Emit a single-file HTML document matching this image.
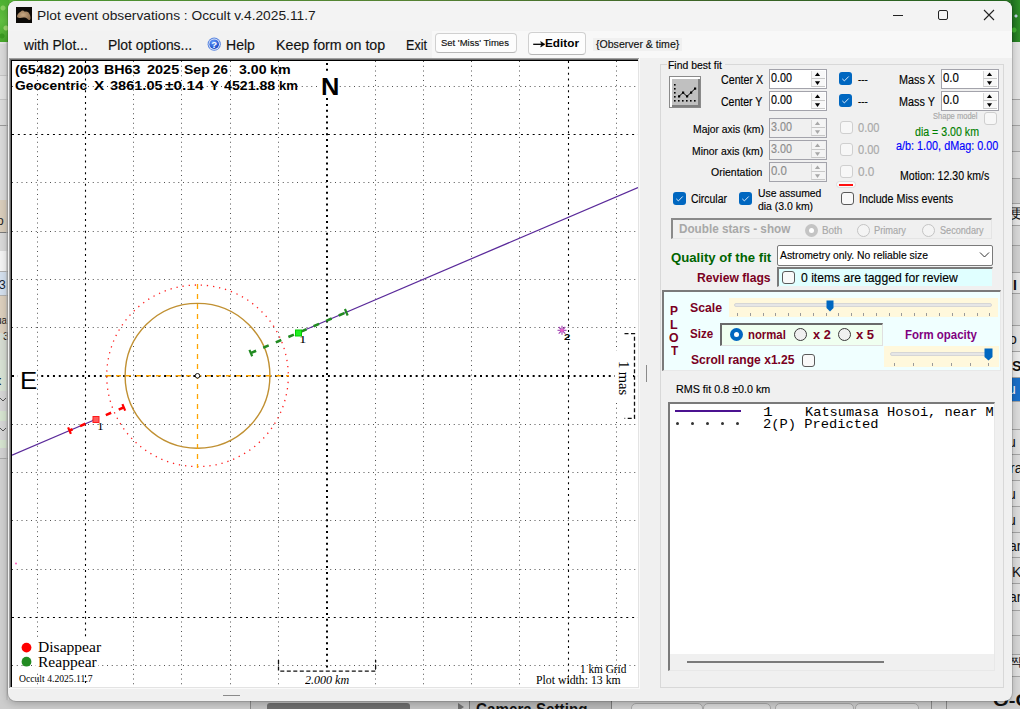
<!DOCTYPE html>
<html><head><meta charset="utf-8"><style>
html,body{margin:0;padding:0;background:#cfcfcf}
#root{position:relative;width:1020px;height:709px;overflow:hidden}
.t{position:absolute;white-space:pre;transform-origin:0 0}
</style></head><body><div id="root">
<div style="position:absolute;left:0px;top:0px;width:1020px;height:709px;background:#cfcfcf"></div>
<div style="position:absolute;left:0px;top:0px;width:1020px;height:42px;background:linear-gradient(90deg,#5ab83a,#6aa040 40%,#4a7a30 70%,#2a7a25)"></div>
<div style="position:absolute;left:0px;top:0px;width:9px;height:42px;background:radial-gradient(circle at 3px 8px,#8ad060 0,#8ad060 2px,transparent 3px),radial-gradient(circle at 6px 28px,#a0d870 0,#a0d870 2px,transparent 3px),radial-gradient(circle at 2px 36px,#3a9a20 0,#3a9a20 2px,transparent 3px),linear-gradient(#4cb030,#62c040 50%,#48a82c)"></div>
<div style="position:absolute;left:1011px;top:0px;width:9px;height:42px;background:radial-gradient(circle at 5px 16px,#c0d0e0 0,#c0d0e0 1px,transparent 2px),radial-gradient(circle at 3px 30px,#40b030 0,#40b030 2px,transparent 3px),linear-gradient(90deg,#1e6e1e,#2e8e28)"></div>
<div style="position:absolute;left:0px;top:42px;width:9px;height:667px;background:#d8d8d8"></div>
<div style="position:absolute;left:0px;top:42px;width:8px;height:2px;background:#e6e6e6"></div>
<div style="position:absolute;left:0px;top:44px;width:8px;height:31px;background:#dadada"></div>
<div style="position:absolute;left:0px;top:75px;width:8px;height:1px;background:#c4c4c4"></div>
<div style="position:absolute;left:0px;top:76px;width:8px;height:23px;background:#e2e2e2"></div>
<div style="position:absolute;left:0px;top:99px;width:8px;height:1px;background:#c4c4c4"></div>
<div style="position:absolute;left:0px;top:100px;width:8px;height:25px;background:#dcdcdc"></div>
<div style="position:absolute;left:0px;top:125px;width:8px;height:1px;background:#9a9a9a"></div>
<div style="position:absolute;left:0px;top:126px;width:8px;height:74px;background:#dadada"></div>
<div style="position:absolute;left:0px;top:200px;width:8px;height:32px;background:#d9cdbb"></div>
<div style="position:absolute;left:0px;top:232px;width:8px;height:1px;background:#7a7a7a"></div>
<div style="position:absolute;left:0px;top:233px;width:8px;height:18px;background:#d9d9d9"></div>
<div style="position:absolute;left:0px;top:251px;width:8px;height:20px;background:#f4f4f4"></div>
<div style="position:absolute;left:0px;top:271px;width:8px;height:1px;background:#b0b0b0"></div>
<div style="position:absolute;left:0px;top:272px;width:8px;height:23px;background:#d4e0ee"></div>
<div style="position:absolute;left:0px;top:295px;width:8px;height:1px;background:#b0b0b0"></div>
<div style="position:absolute;left:0px;top:296px;width:8px;height:37px;background:#dccfbd"></div>
<div style="position:absolute;left:0px;top:333px;width:8px;height:27px;background:#d6dcd2"></div>
<div style="position:absolute;left:0px;top:360px;width:8px;height:31px;background:#d8e2d4"></div>
<div style="position:absolute;left:0px;top:391px;width:8px;height:20px;background:#d6d6d6"></div>
<div style="position:absolute;left:0px;top:411px;width:8px;height:10px;background:#d6e4d0"></div>
<div style="position:absolute;left:0px;top:421px;width:8px;height:19px;background:#d6d6d6"></div>
<div style="position:absolute;left:0px;top:440px;width:8px;height:8px;background:#d6e4d0"></div>
<div style="position:absolute;left:0px;top:448px;width:8px;height:10px;background:#d2d2d2"></div>
<div style="position:absolute;left:0px;top:458px;width:8px;height:1px;background:#a8a8a8"></div>
<div style="position:absolute;left:0px;top:459px;width:8px;height:250px;background:#d0d0d0"></div>
<svg style="position:absolute;left:0;top:0" width="9" height="709" viewBox="0 0 9 709"><text x="-3" y="225" font-family="Liberation Sans" font-size="12" fill="#222">o</text><text x="-1" y="289" font-family="Liberation Sans" font-size="12" fill="#123">3</text><text x="-4" y="324" font-family="Liberation Sans" font-size="10" fill="#222">ua</text><text x="-3" y="340" font-family="Liberation Sans" font-size="11" fill="#222">. 3</text><text x="-3" y="385" font-family="Liberation Sans" font-weight="bold" font-size="12" fill="#111">t</text><path d="M0 398 L3 401 L6 398 M0 428 L3 431 L6 428" stroke="#555" stroke-width="1" fill="none"/><rect x="6" y="42" width="2" height="667" fill="#bdbdbd" opacity="0.6"/></svg>
<div style="position:absolute;left:1012px;top:42px;width:8px;height:57px;background:#e4e4e4"></div>
<div style="position:absolute;left:1012px;top:99px;width:8px;height:26px;background:#dcdcdc"></div>
<div style="position:absolute;left:1012px;top:99px;width:8px;height:1px;background:#a4a4a4"></div>
<div style="position:absolute;left:1012px;top:125px;width:8px;height:26px;background:#d4d4d4"></div>
<div style="position:absolute;left:1012px;top:125px;width:8px;height:1px;background:#a4a4a4"></div>
<div style="position:absolute;left:1012px;top:151px;width:8px;height:27px;background:#dcdcdc"></div>
<div style="position:absolute;left:1012px;top:151px;width:8px;height:1px;background:#a4a4a4"></div>
<div style="position:absolute;left:1012px;top:178px;width:8px;height:25px;background:#cfcfcf"></div>
<div style="position:absolute;left:1012px;top:178px;width:8px;height:1px;background:#a4a4a4"></div>
<div style="position:absolute;left:1012px;top:203px;width:8px;height:22px;background:#e6e6e6"></div>
<div style="position:absolute;left:1012px;top:203px;width:8px;height:1px;background:#a4a4a4"></div>
<div style="position:absolute;left:1012px;top:225px;width:8px;height:20px;background:#d8d8d8"></div>
<div style="position:absolute;left:1012px;top:225px;width:8px;height:1px;background:#a4a4a4"></div>
<div style="position:absolute;left:1012px;top:245px;width:8px;height:27px;background:#d0d0d0"></div>
<div style="position:absolute;left:1012px;top:245px;width:8px;height:1px;background:#a4a4a4"></div>
<div style="position:absolute;left:1012px;top:272px;width:8px;height:21px;background:#e6e6e6"></div>
<div style="position:absolute;left:1012px;top:272px;width:8px;height:1px;background:#a4a4a4"></div>
<div style="position:absolute;left:1012px;top:293px;width:8px;height:32px;background:#dadada"></div>
<div style="position:absolute;left:1012px;top:293px;width:8px;height:1px;background:#a4a4a4"></div>
<div style="position:absolute;left:1012px;top:325px;width:8px;height:26px;background:#e2e2e2"></div>
<div style="position:absolute;left:1012px;top:325px;width:8px;height:1px;background:#a4a4a4"></div>
<div style="position:absolute;left:1012px;top:351px;width:8px;height:26px;background:#ececec"></div>
<div style="position:absolute;left:1012px;top:351px;width:8px;height:1px;background:#a4a4a4"></div>
<div style="position:absolute;left:1012px;top:377px;width:8px;height:24px;background:#1a6fc9"></div>
<div style="position:absolute;left:1012px;top:377px;width:8px;height:1px;background:#a4a4a4"></div>
<div style="position:absolute;left:1012px;top:401px;width:8px;height:28px;background:#dcdcdc"></div>
<div style="position:absolute;left:1012px;top:401px;width:8px;height:1px;background:#a4a4a4"></div>
<div style="position:absolute;left:1012px;top:429px;width:8px;height:25px;background:#e0e0e0"></div>
<div style="position:absolute;left:1012px;top:429px;width:8px;height:1px;background:#a4a4a4"></div>
<div style="position:absolute;left:1012px;top:454px;width:8px;height:26px;background:#dcdcdc"></div>
<div style="position:absolute;left:1012px;top:454px;width:8px;height:1px;background:#a4a4a4"></div>
<div style="position:absolute;left:1012px;top:480px;width:8px;height:26px;background:#e0e0e0"></div>
<div style="position:absolute;left:1012px;top:480px;width:8px;height:1px;background:#a4a4a4"></div>
<div style="position:absolute;left:1012px;top:506px;width:8px;height:26px;background:#dcdcdc"></div>
<div style="position:absolute;left:1012px;top:506px;width:8px;height:1px;background:#a4a4a4"></div>
<div style="position:absolute;left:1012px;top:532px;width:8px;height:25px;background:#e0e0e0"></div>
<div style="position:absolute;left:1012px;top:532px;width:8px;height:1px;background:#a4a4a4"></div>
<div style="position:absolute;left:1012px;top:557px;width:8px;height:26px;background:#dcdcdc"></div>
<div style="position:absolute;left:1012px;top:557px;width:8px;height:1px;background:#a4a4a4"></div>
<div style="position:absolute;left:1012px;top:583px;width:8px;height:27px;background:#e0e0e0"></div>
<div style="position:absolute;left:1012px;top:583px;width:8px;height:1px;background:#a4a4a4"></div>
<div style="position:absolute;left:1012px;top:610px;width:8px;height:25px;background:#dcdcdc"></div>
<div style="position:absolute;left:1012px;top:610px;width:8px;height:1px;background:#a4a4a4"></div>
<div style="position:absolute;left:1012px;top:635px;width:8px;height:19px;background:#d6d6d6"></div>
<div style="position:absolute;left:1012px;top:635px;width:8px;height:1px;background:#a4a4a4"></div>
<div style="position:absolute;left:1012px;top:654px;width:8px;height:22px;background:#e0e0e0"></div>
<div style="position:absolute;left:1012px;top:654px;width:8px;height:1px;background:#a4a4a4"></div>
<div style="position:absolute;left:1012px;top:676px;width:8px;height:33px;background:#d8d8d8"></div>
<div style="position:absolute;left:1012px;top:676px;width:8px;height:1px;background:#a4a4a4"></div>
<svg style="position:absolute;left:1012px;top:0" width="8" height="709" viewBox="0 0 8 709"><g font-family="Liberation Sans" font-size="14" fill="#111"><text x="-2" y="218">更</text><text x="1" y="290" font-weight="bold">I</text><text x="-3" y="344">o</text><text x="0" y="371" font-weight="bold">S</text><text x="-4" y="394" fill="#fff">u</text><text x="-4" y="447">u</text><text x="-2" y="473">ra</text><text x="-4" y="499">u</text><text x="-4" y="525">u</text><text x="-3" y="551">ar</text><text x="0" y="577">K</text><text x="-3" y="602">ar</text><text x="-2" y="666" font-size="12">찍</text></g></svg>
<div style="position:absolute;left:0px;top:700px;width:1020px;height:9px;background:#cdcdcd"></div>
<div style="position:absolute;left:250px;top:700px;width:220px;height:9px;background:#c2c2c2"></div>
<div style="position:absolute;left:470px;top:700px;width:142px;height:9px;background:#b8b8b8"></div>
<div style="position:absolute;left:250px;top:700px;width:1px;height:9px;background:#8a8a8a"></div>
<div style="position:absolute;left:267px;top:703px;width:143px;height:6px;background:#6e6e6e;border-radius:3px 3px 0 0"></div>
<div style="position:absolute;left:469px;top:700px;width:1px;height:9px;background:#7a7a7a"></div>
<div style="position:absolute;left:611px;top:700px;width:1px;height:9px;background:#7a7a7a"></div>
<div style="position:absolute;left:631px;top:703px;width:70px;height:8px;background:#d9d9d9;border:1px solid #a8a8a8;border-radius:5px 5px 0 0"></div>
<div style="position:absolute;left:703px;top:703px;width:66px;height:8px;background:#d9d9d9;border:1px solid #a8a8a8;border-radius:5px 5px 0 0"></div>
<div style="position:absolute;left:775px;top:703px;width:77px;height:8px;background:#d9d9d9;border:1px solid #a8a8a8;border-radius:5px 5px 0 0"></div>
<div style="position:absolute;left:855px;top:703px;width:62px;height:8px;background:#d9d9d9;border:1px solid #a8a8a8;border-radius:5px 5px 0 0"></div>
<div style="position:absolute;left:931px;top:700px;width:1px;height:9px;background:#8a8a8a"></div>
<div style="position:absolute;left:946px;top:700px;width:1px;height:9px;background:#8a8a8a"></div>
<div style="position:absolute;left:458px;top:703px;width:0;height:0;border-left:6px solid #707070;border-top:4px solid transparent;border-bottom:4px solid transparent"></div>
<div class="t" style="left:475.53px;top:701.90px;font-family:'Liberation Sans', sans-serif;font-size:16px;line-height:16px;font-weight:bold;font-style:normal;color:#111;transform:scaleX(0.9496);">Camera Setting</div>
<div class="t" style="left:993.37px;top:693.40px;font-family:'Liberation Sans', sans-serif;font-size:16px;line-height:16px;font-weight:bold;font-style:normal;color:#111;transform:scaleX(1.2621);">O-C</div>
<div style="position:absolute;left:8px;top:1px;width:1004px;height:700px;background:#f0f0f0;border-radius:8px;box-shadow:0 0 0 1px rgba(0,0,0,0.12),0 2px 8px rgba(0,0,0,0.25)"></div>
<div style="position:absolute;left:8px;top:1px;width:1004px;height:30px;background:#f3f3f3;border-radius:8px 8px 0 0"></div>
<div style="position:absolute;left:8px;top:31px;width:424px;height:27px;background:#f2f2f2"></div>
<div style="position:absolute;left:432px;top:31px;width:580px;height:27px;background:#f8f8f8"></div>
<svg style="position:absolute;left:16px;top:7px" width="16" height="16" viewBox="0 0 16 16"><defs><radialGradient id="ig" cx="0.45" cy="0.45" r="0.6"><stop offset="0" stop-color="#c9a982"/><stop offset="1" stop-color="#8f7050"/></radialGradient></defs><rect width="16" height="16" fill="#0c0a07"/><path d="M1 10 C0.8 8 2.5 6 4.5 4.8 C5.5 3.8 6.5 3.2 7.5 3.8 C8 4.3 8.5 4.8 9.5 4.6 C11 4.3 12.5 5 13.5 7 C14.5 9 15 11.5 14 12.8 C13 13.5 12 12.5 11 11.5 C10 10.8 9 10.3 7.5 10.6 C5.5 11 2.5 11.5 1 10 Z" fill="url(#ig)"/></svg>
<div style="position:absolute;left:893px;top:15px;width:10px;height:1px;background:#222"></div>
<div style="position:absolute;left:938px;top:10px;width:10px;height:10px;border:1px solid #222;border-radius:2px;box-sizing:border-box"></div>
<svg style="position:absolute;left:983px;top:9px" width="12" height="12" viewBox="0 0 12 12"><path d="M1 1 L11 11 M11 1 L1 11" stroke="#222" stroke-width="1.1"/></svg>
<svg style="position:absolute;left:207px;top:37px" width="15" height="15" viewBox="0 0 15 15"><defs><radialGradient id="hg" cx="0.4" cy="0.3" r="0.75"><stop offset="0" stop-color="#6aa0ff"/><stop offset="1" stop-color="#1040c0"/></radialGradient></defs><circle cx="7.2" cy="7.2" r="6.6" fill="#5a86e0"/><circle cx="7.2" cy="7.2" r="5.6" fill="#fff" opacity="0.85"/><circle cx="7.2" cy="7.2" r="4.8" fill="url(#hg)"/><text x="7.2" y="10.6" font-family="Liberation Sans" font-weight="bold" font-size="9.5" fill="#fff" text-anchor="middle">?</text></svg>
<div style="position:absolute;left:435px;top:33px;width:82px;height:20px;background:#fdfdfd;border:1px solid #d0d0d0;border-bottom-color:#b8b8b8;border-radius:4px;box-sizing:border-box"></div>
<div style="position:absolute;left:527.5px;top:32.3px;width:58px;height:22.5px;background:#fdfdfd;border:1px solid #d0d0d0;border-bottom-color:#b8b8b8;border-radius:4px;box-sizing:border-box"></div>
<svg style="position:absolute;left:532px;top:39px" width="14" height="11" viewBox="0 0 14 11"><path d="M1.2 5.3 H11" stroke="#000" stroke-width="1.3"/><path d="M13 5.3 L8.6 2.6 L9.6 5.3 L8.6 8 Z" fill="#000" stroke="#000" stroke-width="0.5" stroke-linejoin="round"/></svg>
<div style="position:absolute;left:593px;top:38px;width:89px;height:13px;background:#f0f0f0"></div>
<div style="position:absolute;left:9px;top:58px;width:631px;height:631px;background:#fafafa"></div>
<div style="position:absolute;left:9px;top:58px;width:630px;height:630px;background:#a0a0a0"></div>
<div style="position:absolute;left:10px;top:59px;width:629px;height:629px;background:#e3e3e3"></div>
<div style="position:absolute;left:10px;top:59px;width:628px;height:628px;background:#6a6a6a"></div>
<div style="position:absolute;left:11px;top:60px;width:627px;height:627px;background:#000"></div>
<div style="position:absolute;left:12px;top:61px;width:626px;height:626px;background:#fff"></div>
<svg style="position:absolute;left:0;top:0" width="1020" height="709" viewBox="0 0 1020 709"><defs><clipPath id="pc"><rect x="12" y="61" width="626" height="626"/></clipPath></defs><g clip-path="url(#pc)"><line x1="37.5" y1="61" x2="37.5" y2="687" stroke="#505050" stroke-width="1" stroke-dasharray="1 3.75"/><line x1="85.5" y1="61" x2="85.5" y2="687" stroke="#000" stroke-width="1.1" stroke-dasharray="2 3.85"/><line x1="133.5" y1="61" x2="133.5" y2="687" stroke="#505050" stroke-width="1" stroke-dasharray="1 3.75"/><line x1="181.5" y1="61" x2="181.5" y2="687" stroke="#505050" stroke-width="1" stroke-dasharray="1 3.75"/><line x1="230.5" y1="61" x2="230.5" y2="687" stroke="#505050" stroke-width="1" stroke-dasharray="1 3.75"/><line x1="278.5" y1="61" x2="278.5" y2="687" stroke="#505050" stroke-width="1" stroke-dasharray="1 3.75"/><line x1="327" y1="63" x2="327" y2="668" stroke="#000" stroke-width="2" stroke-dasharray="2 3.85"/><line x1="375.5" y1="61" x2="375.5" y2="687" stroke="#505050" stroke-width="1" stroke-dasharray="1 3.75"/><line x1="423.5" y1="61" x2="423.5" y2="687" stroke="#505050" stroke-width="1" stroke-dasharray="1 3.75"/><line x1="471.5" y1="61" x2="471.5" y2="687" stroke="#505050" stroke-width="1" stroke-dasharray="1 3.75"/><line x1="519.5" y1="61" x2="519.5" y2="687" stroke="#505050" stroke-width="1" stroke-dasharray="1 3.75"/><line x1="568.5" y1="61" x2="568.5" y2="687" stroke="#000" stroke-width="1.1" stroke-dasharray="2 3.85"/><line x1="616.5" y1="61" x2="616.5" y2="687" stroke="#505050" stroke-width="1" stroke-dasharray="1 3.75"/><line x1="12" y1="86.5" x2="638" y2="86.5" stroke="#505050" stroke-width="1" stroke-dasharray="1 3.75"/><line x1="12" y1="134.5" x2="638" y2="134.5" stroke="#000" stroke-width="1.1" stroke-dasharray="2 3.85"/><line x1="12" y1="182.5" x2="638" y2="182.5" stroke="#505050" stroke-width="1" stroke-dasharray="1 3.75"/><line x1="12" y1="231.5" x2="638" y2="231.5" stroke="#505050" stroke-width="1" stroke-dasharray="1 3.75"/><line x1="12" y1="279.5" x2="638" y2="279.5" stroke="#505050" stroke-width="1" stroke-dasharray="1 3.75"/><line x1="12" y1="327.5" x2="638" y2="327.5" stroke="#505050" stroke-width="1" stroke-dasharray="1 3.75"/><line x1="12" y1="376" x2="638" y2="376" stroke="#000" stroke-width="2" stroke-dasharray="2 3.85"/><line x1="12" y1="424.5" x2="638" y2="424.5" stroke="#505050" stroke-width="1" stroke-dasharray="1 3.75"/><line x1="12" y1="472.5" x2="638" y2="472.5" stroke="#505050" stroke-width="1" stroke-dasharray="1 3.75"/><line x1="12" y1="520.5" x2="638" y2="520.5" stroke="#505050" stroke-width="1" stroke-dasharray="1 3.75"/><line x1="12" y1="569.5" x2="638" y2="569.5" stroke="#505050" stroke-width="1" stroke-dasharray="1 3.75"/><line x1="12" y1="617.5" x2="638" y2="617.5" stroke="#000" stroke-width="1.1" stroke-dasharray="2 3.85"/><line x1="12" y1="665.5" x2="638" y2="665.5" stroke="#505050" stroke-width="1" stroke-dasharray="1 3.75"/><circle cx="197.5" cy="375.8" r="90.8" fill="none" stroke="#ff2020" stroke-width="1.3" stroke-dasharray="1.3 4.85"/><circle cx="197.5" cy="375.8" r="72.4" fill="none" stroke="#c09032" stroke-width="1.4"/><line x1="197.5" y1="284" x2="197.5" y2="468" stroke="#ffa500" stroke-width="1.3" stroke-dasharray="5 5"/><line x1="106" y1="375.8" x2="289" y2="375.8" stroke="#ffa500" stroke-width="1.6" stroke-dasharray="5 5"/><circle cx="197.5" cy="375.8" r="2.3" fill="#fff" stroke="#111" stroke-width="1"/><line x1="12" y1="455.2" x2="96" y2="419.28" stroke="#5a2a9a" stroke-width="1.25"/><line x1="298.3" y1="332.77" x2="638" y2="187.5" stroke="#5a2a9a" stroke-width="1.25"/><line x1="69.2" y1="430.74" x2="124.3" y2="407.18" stroke="#ff0000" stroke-width="2.6" stroke-dasharray="5.8 8.2" stroke-dashoffset="2.17"/><line x1="68.12" y1="427.39" x2="70.88" y2="433.83" stroke="#ff0000" stroke-width="2.2"/><line x1="122.42" y1="404.17" x2="125.18" y2="410.61" stroke="#ff0000" stroke-width="2.2"/><rect x="93" y="416.5" width="6" height="6" fill="#ff5a5a" stroke="#ff1a1a" stroke-width="1"/><line x1="250.6" y1="353.17" x2="346.5" y2="312.16" stroke="#228b22" stroke-width="2.6" stroke-dasharray="6 7.7" stroke-dashoffset="0"/><line x1="249.42" y1="349.86" x2="252.18" y2="356.30" stroke="#228b22" stroke-width="2.2"/><line x1="344.92" y1="309.02" x2="347.68" y2="315.46" stroke="#228b22" stroke-width="2.2"/><rect x="295.5" y="330" width="6" height="6" fill="#22ee22" stroke="#00cc00" stroke-width="1"/><g stroke="#a040b0" stroke-width="1.1"><line x1="557.5" y1="330.3" x2="566.5" y2="330.3"/><line x1="562" y1="325.8" x2="562" y2="334.8"/><line x1="558.7" y1="327.0" x2="565.3" y2="333.6"/><line x1="558.7" y1="333.6" x2="565.3" y2="327.0"/></g><circle cx="562" cy="330.3" r="1.6" fill="#f060c8"/><path d="M624.5 333.7 H634.5 V418.4 H624.5" fill="none" stroke="#111" stroke-width="1.3" stroke-dasharray="4 2.5"/><path d="M278.5 660 V671.2 H375.6 V660" fill="none" stroke="#111" stroke-width="1.3" stroke-dasharray="4 2.5"/><rect x="318" y="73" width="21" height="25" fill="#fff"/><rect x="18" y="369" width="19" height="24" fill="#fff"/><rect x="36" y="640" width="62" height="32" fill="#fff"/><circle cx="26.5" cy="647.6" r="4.9" fill="#ff0000"/><circle cx="26.5" cy="661.7" r="4.9" fill="#228b22"/><circle cx="16" cy="563.5" r="1" fill="#ff60c0"/></g></svg>
<div style="position:absolute;left:615px;top:351px;width:18px;height:51px;background:#fff"></div>
<div style="position:absolute;left:623.6px;top:378px;width:0;height:0"><div style="position:absolute;left:0;top:0;transform:translate(-50%,-50%) rotate(90deg);font-family:&quot;Liberation Serif&quot;,serif;font-size:14.5px;line-height:14.5px;white-space:pre;color:#000">1 mas</div></div>
<div style="position:absolute;left:646px;top:365px;width:1px;height:17px;background:#8a8a8a"></div>
<div style="position:absolute;left:223px;top:695px;width:17px;height:1px;background:#8a8a8a"></div>
<div style="position:absolute;left:660px;top:64px;width:344px;height:624px;border:1px solid #d8d8d8;box-sizing:border-box"></div>
<div style="position:absolute;left:667px;top:58px;width:58px;height:12px;background:#f0f0f0"></div>
<div style="position:absolute;left:669px;top:76px;width:32px;height:32px;background:#c0c0c0;border:1px solid #8a8a8a;box-sizing:border-box;box-shadow:inset 2px 2px 0 #fff, inset -2px -2px 0 #808080"></div>
<svg style="position:absolute;left:669px;top:76px" width="32" height="32" viewBox="0 0 32 32"><g fill="#000"><rect x="5" y="8" width="1.6" height="1.6"/><rect x="5" y="12" width="1.6" height="1.6"/><rect x="5" y="16" width="1.6" height="1.6"/><rect x="5" y="20" width="1.6" height="1.6"/><rect x="5" y="24" width="1.6" height="1.6"/><rect x="9" y="24" width="1.6" height="1.6"/><rect x="13" y="24" width="1.6" height="1.6"/><rect x="17" y="24" width="1.6" height="1.6"/><rect x="21" y="24" width="1.6" height="1.6"/><rect x="25" y="24" width="1.6" height="1.6"/><rect x="9" y="19.3" width="2.2" height="2.2"/><rect x="13" y="15.5" width="2.2" height="2.2"/><rect x="17" y="19.3" width="2.2" height="2.2"/><rect x="21" y="15.5" width="2.2" height="2.2"/><rect x="25" y="11.5" width="2.2" height="2.2"/></g><path d="M10 20.4 L14 16.6 L18 20.4 L22 16.6 L26 12.6" stroke="#000" stroke-width="1" fill="none"/></svg>
<div style="position:absolute;left:769px;top:69px;width:58px;height:20px;background:#fff;border:1px solid #a3a3ab;box-sizing:border-box"></div>
<div style="position:absolute;left:811px;top:71px;width:13px;height:7px;background:#f8f8f8;border-left:1px solid #d8d8d8;border-bottom:1px solid #c8c8c8"></div>
<div style="position:absolute;left:811px;top:79px;width:13px;height:7px;background:#f8f8f8;border-left:1px solid #d8d8d8;border-bottom:1px solid #c8c8c8"></div>
<svg style="position:absolute;left:811px;top:71px" width="14" height="16" viewBox="0 0 14 16"><path d="M3.9 5.1 L9.1 5.1 L6.5 1.5 Z" fill="#000"/><path d="M3.9 10.3 L9.1 10.3 L6.5 13.9 Z" fill="#000"/></svg>
<div style="position:absolute;left:769px;top:91px;width:58px;height:20px;background:#fff;border:1px solid #a3a3ab;box-sizing:border-box"></div>
<div style="position:absolute;left:811px;top:93px;width:13px;height:7px;background:#f8f8f8;border-left:1px solid #d8d8d8;border-bottom:1px solid #c8c8c8"></div>
<div style="position:absolute;left:811px;top:101px;width:13px;height:7px;background:#f8f8f8;border-left:1px solid #d8d8d8;border-bottom:1px solid #c8c8c8"></div>
<svg style="position:absolute;left:811px;top:93px" width="14" height="16" viewBox="0 0 14 16"><path d="M3.9 5.1 L9.1 5.1 L6.5 1.5 Z" fill="#000"/><path d="M3.9 10.3 L9.1 10.3 L6.5 13.9 Z" fill="#000"/></svg>
<div style="position:absolute;left:839px;top:72px;width:13px;height:13px;background:#0067c0;border-radius:3px"></div>
<svg style="position:absolute;left:839px;top:72px" width="13" height="13" viewBox="0 0 13 13"><path d="M3.3 6.9 L5.4 8.9 L9.7 4.5" stroke="#f4f8ff" stroke-width="0.9" fill="none"/></svg>
<div style="position:absolute;left:839px;top:94px;width:13px;height:13px;background:#0067c0;border-radius:3px"></div>
<svg style="position:absolute;left:839px;top:94px" width="13" height="13" viewBox="0 0 13 13"><path d="M3.3 6.9 L5.4 8.9 L9.7 4.5" stroke="#f4f8ff" stroke-width="0.9" fill="none"/></svg>
<div style="position:absolute;left:941px;top:69px;width:58px;height:20px;background:#fff;border:1px solid #a3a3ab;box-sizing:border-box"></div>
<div style="position:absolute;left:983px;top:71px;width:13px;height:7px;background:#f8f8f8;border-left:1px solid #d8d8d8;border-bottom:1px solid #c8c8c8"></div>
<div style="position:absolute;left:983px;top:79px;width:13px;height:7px;background:#f8f8f8;border-left:1px solid #d8d8d8;border-bottom:1px solid #c8c8c8"></div>
<svg style="position:absolute;left:983px;top:71px" width="14" height="16" viewBox="0 0 14 16"><path d="M3.9 5.1 L9.1 5.1 L6.5 1.5 Z" fill="#000"/><path d="M3.9 10.3 L9.1 10.3 L6.5 13.9 Z" fill="#000"/></svg>
<div style="position:absolute;left:941px;top:91px;width:58px;height:20px;background:#fff;border:1px solid #a3a3ab;box-sizing:border-box"></div>
<div style="position:absolute;left:983px;top:93px;width:13px;height:7px;background:#f8f8f8;border-left:1px solid #d8d8d8;border-bottom:1px solid #c8c8c8"></div>
<div style="position:absolute;left:983px;top:101px;width:13px;height:7px;background:#f8f8f8;border-left:1px solid #d8d8d8;border-bottom:1px solid #c8c8c8"></div>
<svg style="position:absolute;left:983px;top:93px" width="14" height="16" viewBox="0 0 14 16"><path d="M3.9 5.1 L9.1 5.1 L6.5 1.5 Z" fill="#000"/><path d="M3.9 10.3 L9.1 10.3 L6.5 13.9 Z" fill="#000"/></svg>
<div style="position:absolute;left:984px;top:111.5px;width:13px;height:13px;background:#f7f7f7;border:1px solid #cfcfcf;border-radius:3px;box-sizing:border-box"></div>
<div style="position:absolute;left:769px;top:118px;width:58px;height:20px;background:#f0f0f0;border:1px solid #a3a3ab;box-sizing:border-box"></div>
<div style="position:absolute;left:811px;top:120px;width:13px;height:7px;background:#f4f4f4;border-left:1px solid #d8d8d8;border-bottom:1px solid #c8c8c8"></div>
<div style="position:absolute;left:811px;top:128px;width:13px;height:7px;background:#f4f4f4;border-left:1px solid #d8d8d8;border-bottom:1px solid #c8c8c8"></div>
<svg style="position:absolute;left:811px;top:120px" width="14" height="16" viewBox="0 0 14 16"><path d="M3.9 5.1 L9.1 5.1 L6.5 1.5 Z" fill="#a8a8a8"/><path d="M3.9 10.3 L9.1 10.3 L6.5 13.9 Z" fill="#a8a8a8"/></svg>
<div style="position:absolute;left:769px;top:140px;width:58px;height:20px;background:#f0f0f0;border:1px solid #a3a3ab;box-sizing:border-box"></div>
<div style="position:absolute;left:811px;top:142px;width:13px;height:7px;background:#f4f4f4;border-left:1px solid #d8d8d8;border-bottom:1px solid #c8c8c8"></div>
<div style="position:absolute;left:811px;top:150px;width:13px;height:7px;background:#f4f4f4;border-left:1px solid #d8d8d8;border-bottom:1px solid #c8c8c8"></div>
<svg style="position:absolute;left:811px;top:142px" width="14" height="16" viewBox="0 0 14 16"><path d="M3.9 5.1 L9.1 5.1 L6.5 1.5 Z" fill="#a8a8a8"/><path d="M3.9 10.3 L9.1 10.3 L6.5 13.9 Z" fill="#a8a8a8"/></svg>
<div style="position:absolute;left:769px;top:162px;width:58px;height:20px;background:#f0f0f0;border:1px solid #a3a3ab;box-sizing:border-box"></div>
<div style="position:absolute;left:811px;top:164px;width:13px;height:7px;background:#f4f4f4;border-left:1px solid #d8d8d8;border-bottom:1px solid #c8c8c8"></div>
<div style="position:absolute;left:811px;top:172px;width:13px;height:7px;background:#f4f4f4;border-left:1px solid #d8d8d8;border-bottom:1px solid #c8c8c8"></div>
<svg style="position:absolute;left:811px;top:164px" width="14" height="16" viewBox="0 0 14 16"><path d="M3.9 5.1 L9.1 5.1 L6.5 1.5 Z" fill="#a8a8a8"/><path d="M3.9 10.3 L9.1 10.3 L6.5 13.9 Z" fill="#a8a8a8"/></svg>
<div style="position:absolute;left:839.5px;top:121px;width:13px;height:13px;background:#f7f7f7;border:1px solid #cfcfcf;border-radius:3px;box-sizing:border-box"></div>
<div style="position:absolute;left:839.5px;top:143px;width:13px;height:13px;background:#f7f7f7;border:1px solid #cfcfcf;border-radius:3px;box-sizing:border-box"></div>
<div style="position:absolute;left:839.5px;top:165px;width:13px;height:13px;background:#f7f7f7;border:1px solid #cfcfcf;border-radius:3px;box-sizing:border-box"></div>
<div style="position:absolute;left:836px;top:181px;width:20px;height:7px;background:#fafafa;border:1px solid #dcdcdc;border-radius:4px;box-sizing:border-box"></div>
<div style="position:absolute;left:839px;top:183.5px;width:14px;height:2px;background:#ff1010"></div>
<div style="position:absolute;left:673px;top:192px;width:13px;height:13px;background:#0067c0;border-radius:3px"></div>
<svg style="position:absolute;left:673px;top:192px" width="13" height="13" viewBox="0 0 13 13"><path d="M3.3 6.9 L5.4 8.9 L9.7 4.5" stroke="#f4f8ff" stroke-width="0.9" fill="none"/></svg>
<div style="position:absolute;left:739px;top:192px;width:13px;height:13px;background:#0067c0;border-radius:3px"></div>
<svg style="position:absolute;left:739px;top:192px" width="13" height="13" viewBox="0 0 13 13"><path d="M3.3 6.9 L5.4 8.9 L9.7 4.5" stroke="#f4f8ff" stroke-width="0.9" fill="none"/></svg>
<div style="position:absolute;left:841px;top:192px;width:13px;height:13px;background:#f9f9f9;border:1px solid #5a5a5a;border-radius:3px;box-sizing:border-box"></div>
<div style="position:absolute;left:671px;top:218px;width:321px;height:21px;background:#f0f0f0;border-top:2px solid #8a8a8a;border-left:2px solid #8a8a8a;border-right:1px solid #e4e4e4;border-bottom:1px solid #e4e4e4;box-sizing:border-box"></div>
<div style="position:absolute;left:804.5px;top:224.3px;width:13px;height:13px;border-radius:50%;background:#c4c4c4"></div>
<div style="position:absolute;left:808.5px;top:228.3px;width:5px;height:5px;border-radius:50%;background:#fff"></div>
<div style="position:absolute;left:857.0px;top:224.3px;width:13px;height:13px;border-radius:50%;background:#f4f4f4;border:1px solid #c4c4c4;box-sizing:border-box"></div>
<div style="position:absolute;left:921.5px;top:224.3px;width:13px;height:13px;border-radius:50%;background:#f4f4f4;border:1px solid #c4c4c4;box-sizing:border-box"></div>
<div style="position:absolute;left:777px;top:245px;width:216px;height:21px;background:#fff;border:1px solid #7a7a7a;border-radius:2px;box-sizing:border-box"></div>
<svg style="position:absolute;left:979px;top:251px" width="12" height="8" viewBox="0 0 12 8"><path d="M1 1.5 L5.5 6 L10 1.5" stroke="#333" stroke-width="1" fill="none"/></svg>
<div style="position:absolute;left:777px;top:267px;width:216px;height:20px;background:#e0ffff;border-top:2px solid #7a7a7a;border-left:2px solid #7a7a7a;border-right:1px solid #f0f0f0;border-bottom:1px solid #f0f0f0;box-sizing:border-box"></div>
<div style="position:absolute;left:782px;top:271px;width:13px;height:13px;background:#f9f9f9;border:1px solid #5a5a5a;border-radius:3px;box-sizing:border-box"></div>
<div style="position:absolute;left:662px;top:290px;width:339px;height:81px;background:#f0ffff;border-top:2px solid #7a7a7a;border-left:2px solid #7a7a7a;border-right:1px solid #e8e8e8;border-bottom:1px solid #e8e8e8;box-sizing:border-box"></div>
<div style="position:absolute;left:729px;top:298px;width:269px;height:19px;background:#fff8dc"></div>
<div style="position:absolute;left:734px;top:303px;width:258px;height:4px;background:#e6e6e6;border:1px solid #d6d6d6;box-sizing:border-box;border-radius:2px"></div>
<svg style="position:absolute;left:826px;top:300px" width="8" height="12" viewBox="0 0 8 12"><path d="M0.5 0.5 H7.5 V8 L4 11.5 L0.5 8 Z" fill="#0067c0"/></svg>
<div style="position:absolute;left:737px;top:313px;width:1px;height:3px;background:#9a9a9a"></div>
<div style="position:absolute;left:750px;top:313px;width:1px;height:3px;background:#9a9a9a"></div>
<div style="position:absolute;left:763px;top:313px;width:1px;height:3px;background:#9a9a9a"></div>
<div style="position:absolute;left:775px;top:313px;width:1px;height:3px;background:#9a9a9a"></div>
<div style="position:absolute;left:788px;top:313px;width:1px;height:3px;background:#9a9a9a"></div>
<div style="position:absolute;left:800px;top:313px;width:1px;height:3px;background:#9a9a9a"></div>
<div style="position:absolute;left:813px;top:313px;width:1px;height:3px;background:#9a9a9a"></div>
<div style="position:absolute;left:826px;top:313px;width:1px;height:3px;background:#9a9a9a"></div>
<div style="position:absolute;left:838px;top:313px;width:1px;height:3px;background:#9a9a9a"></div>
<div style="position:absolute;left:851px;top:313px;width:1px;height:3px;background:#9a9a9a"></div>
<div style="position:absolute;left:863px;top:313px;width:1px;height:3px;background:#9a9a9a"></div>
<div style="position:absolute;left:876px;top:313px;width:1px;height:3px;background:#9a9a9a"></div>
<div style="position:absolute;left:889px;top:313px;width:1px;height:3px;background:#9a9a9a"></div>
<div style="position:absolute;left:901px;top:313px;width:1px;height:3px;background:#9a9a9a"></div>
<div style="position:absolute;left:914px;top:313px;width:1px;height:3px;background:#9a9a9a"></div>
<div style="position:absolute;left:926px;top:313px;width:1px;height:3px;background:#9a9a9a"></div>
<div style="position:absolute;left:939px;top:313px;width:1px;height:3px;background:#9a9a9a"></div>
<div style="position:absolute;left:952px;top:313px;width:1px;height:3px;background:#9a9a9a"></div>
<div style="position:absolute;left:964px;top:313px;width:1px;height:3px;background:#9a9a9a"></div>
<div style="position:absolute;left:977px;top:313px;width:1px;height:3px;background:#9a9a9a"></div>
<div style="position:absolute;left:989px;top:313px;width:1px;height:3px;background:#9a9a9a"></div>
<div style="position:absolute;left:720px;top:323px;width:163px;height:23px;background:#f0fff0;border-top:2px solid #6a6a6a;border-left:2px solid #6a6a6a;border-right:1px solid #e0e0e0;border-bottom:1px solid #e0e0e0;box-sizing:border-box"></div>
<div style="position:absolute;left:729.9px;top:328.1px;width:13px;height:13px;border-radius:50%;background:#0067c0"></div>
<div style="position:absolute;left:733.9px;top:332.1px;width:5px;height:5px;border-radius:50%;background:#fff"></div>
<div style="position:absolute;left:793.7px;top:328.1px;width:13px;height:13px;border-radius:50%;background:#f0f0f0;border:1px solid #3a3a3a;box-sizing:border-box"></div>
<div style="position:absolute;left:838.0px;top:328.1px;width:13px;height:13px;border-radius:50%;background:#f0f0f0;border:1px solid #3a3a3a;box-sizing:border-box"></div>
<div style="position:absolute;left:884px;top:346px;width:115px;height:21px;background:#fff8dc"></div>
<div style="position:absolute;left:890px;top:352px;width:102px;height:4px;background:#e6e6e6;border:1px solid #d6d6d6;box-sizing:border-box;border-radius:2px"></div>
<svg style="position:absolute;left:984px;top:348px" width="9" height="13" viewBox="0 0 9 13"><path d="M0.5 0.5 H8.5 V9 L4.5 12.5 L0.5 9 Z" fill="#0067c0"/></svg>
<div style="position:absolute;left:894px;top:363px;width:1px;height:3px;background:#9a9a9a"></div>
<div style="position:absolute;left:913px;top:363px;width:1px;height:3px;background:#9a9a9a"></div>
<div style="position:absolute;left:932px;top:363px;width:1px;height:3px;background:#9a9a9a"></div>
<div style="position:absolute;left:951px;top:363px;width:1px;height:3px;background:#9a9a9a"></div>
<div style="position:absolute;left:970px;top:363px;width:1px;height:3px;background:#9a9a9a"></div>
<div style="position:absolute;left:988px;top:363px;width:1px;height:3px;background:#9a9a9a"></div>
<div style="position:absolute;left:802px;top:353.5px;width:13px;height:13px;background:#f9f9f9;border:1px solid #5a5a5a;border-radius:3px;box-sizing:border-box"></div>
<div style="position:absolute;left:668px;top:402px;width:327px;height:269px;background:#fff;border-top:2px solid #7a7a7a;border-left:2px solid #7a7a7a;border-right:1px solid #e8e8e8;border-bottom:1px solid #e8e8e8;box-sizing:border-box"></div>
<div style="position:absolute;left:670px;top:654px;width:324px;height:16px;background:#f0f0f0"></div>
<div style="position:absolute;left:687px;top:661px;width:197px;height:2px;background:#7a7a7a"></div>
<div style="position:absolute;left:675px;top:410px;width:66px;height:2px;background:#4b1290"></div>
<div style="position:absolute;left:675.5px;top:421.5px;width:3px;height:3px;border-radius:50%;background:#333"></div>
<div style="position:absolute;left:690.5px;top:421.5px;width:3px;height:3px;border-radius:50%;background:#333"></div>
<div style="position:absolute;left:705.5px;top:421.5px;width:3px;height:3px;border-radius:50%;background:#333"></div>
<div style="position:absolute;left:720.5px;top:421.5px;width:3px;height:3px;border-radius:50%;background:#333"></div>
<div style="position:absolute;left:735.5px;top:421.5px;width:3px;height:3px;border-radius:50%;background:#333"></div>
<div class="t" style="left:36.72px;top:9.21px;font-family:'Liberation Sans', sans-serif;font-size:13.4px;line-height:13.4px;font-weight:normal;font-style:normal;color:#1a1a1a;transform:scaleX(1.0275);-webkit-text-stroke:0.15px #1a1a1a;-webkit-text-stroke:0;">Plot event observations : Occult v.4.2025.11.7</div>
<div class="t" style="left:24.22px;top:38.00px;font-family:'Liberation Sans', sans-serif;font-size:14px;line-height:14px;font-weight:normal;font-style:normal;color:#111;transform:scaleX(0.9869);-webkit-text-stroke:0.15px #111;">with Plot...</div>
<div class="t" style="left:107.62px;top:38.00px;font-family:'Liberation Sans', sans-serif;font-size:14px;line-height:14px;font-weight:normal;font-style:normal;color:#111;transform:scaleX(0.9919);-webkit-text-stroke:0.15px #111;">Plot options...</div>
<div class="t" style="left:225.70px;top:38.00px;font-family:'Liberation Sans', sans-serif;font-size:14px;line-height:14px;font-weight:normal;font-style:normal;color:#111;transform:scaleX(1.0025);-webkit-text-stroke:0.15px #111;">Help</div>
<div class="t" style="left:276.39px;top:38.00px;font-family:'Liberation Sans', sans-serif;font-size:14px;line-height:14px;font-weight:normal;font-style:normal;color:#111;transform:scaleX(1.0167);-webkit-text-stroke:0.15px #111;">Keep form on top</div>
<div class="t" style="left:405.72px;top:38.00px;font-family:'Liberation Sans', sans-serif;font-size:14px;line-height:14px;font-weight:normal;font-style:normal;color:#111;transform:scaleX(0.8972);-webkit-text-stroke:0.15px #111;">Exit</div>
<div class="t" style="left:440.90px;top:37.84px;font-family:'Liberation Sans', sans-serif;font-size:9.6px;line-height:9.6px;font-weight:normal;font-style:normal;color:#111;transform:scaleX(0.9880);-webkit-text-stroke:0.15px #111;">Set 'Miss' Times</div>
<div class="t" style="left:544.65px;top:37.67px;font-family:'Liberation Sans', sans-serif;font-size:11.8px;line-height:11.8px;font-weight:bold;font-style:normal;color:#000;transform:scaleX(0.9972);">Editor</div>
<div class="t" style="left:595.85px;top:39.32px;font-family:'Liberation Sans', sans-serif;font-size:10.8px;line-height:10.8px;font-weight:normal;font-style:normal;color:#111;transform:scaleX(0.9773);-webkit-text-stroke:0.15px #111;">{Observer &amp; time}</div>
<div class="t" style="left:15.22px;top:63.12px;font-family:'Liberation Sans', sans-serif;font-size:13.5px;line-height:13.5px;font-weight:bold;font-style:normal;color:#000;transform:scaleX(1.0680);">(65482)</div>
<div class="t" style="left:68.36px;top:63.12px;font-family:'Liberation Sans', sans-serif;font-size:13.5px;line-height:13.5px;font-weight:bold;font-style:normal;color:#000;transform:scaleX(1.0316);">2003</div>
<div class="t" style="left:104.01px;top:63.12px;font-family:'Liberation Sans', sans-serif;font-size:13.5px;line-height:13.5px;font-weight:bold;font-style:normal;color:#000;transform:scaleX(1.0560);">BH63</div>
<div class="t" style="left:146.55px;top:63.12px;font-family:'Liberation Sans', sans-serif;font-size:13.5px;line-height:13.5px;font-weight:bold;font-style:normal;color:#000;transform:scaleX(1.0726);">2025</div>
<div class="t" style="left:183.78px;top:63.12px;font-family:'Liberation Sans', sans-serif;font-size:13.5px;line-height:13.5px;font-weight:bold;font-style:normal;color:#000;transform:scaleX(1.0371);">Sep</div>
<div class="t" style="left:213.28px;top:63.12px;font-family:'Liberation Sans', sans-serif;font-size:13.5px;line-height:13.5px;font-weight:bold;font-style:normal;color:#000;transform:scaleX(0.9889);">26</div>
<div class="t" style="left:238.58px;top:63.12px;font-family:'Liberation Sans', sans-serif;font-size:13.5px;line-height:13.5px;font-weight:bold;font-style:normal;color:#000;transform:scaleX(1.0464);">3.00</div>
<div class="t" style="left:270.11px;top:63.12px;font-family:'Liberation Sans', sans-serif;font-size:13.5px;line-height:13.5px;font-weight:bold;font-style:normal;color:#000;transform:scaleX(1.0536);">km</div>
<div class="t" style="left:15.47px;top:78.73px;font-family:'Liberation Sans', sans-serif;font-size:13.5px;line-height:13.5px;font-weight:bold;font-style:normal;color:#000;transform:scaleX(1.0220);">Geocentric</div>
<div class="t" style="left:93.80px;top:78.73px;font-family:'Liberation Sans', sans-serif;font-size:13.5px;line-height:13.5px;font-weight:bold;font-style:normal;color:#000;transform:scaleX(1.1356);">X</div>
<div class="t" style="left:109.77px;top:78.73px;font-family:'Liberation Sans', sans-serif;font-size:13.5px;line-height:13.5px;font-weight:bold;font-style:normal;color:#000;transform:scaleX(1.0777);">3861.05</div>
<div class="t" style="left:164.76px;top:78.73px;font-family:'Liberation Sans', sans-serif;font-size:13.5px;line-height:13.5px;font-weight:bold;font-style:normal;color:#000;transform:scaleX(1.1472);">±0.14</div>
<div class="t" style="left:209.59px;top:78.73px;font-family:'Liberation Sans', sans-serif;font-size:13.5px;line-height:13.5px;font-weight:bold;font-style:normal;color:#000;transform:scaleX(0.9944);">Y</div>
<div class="t" style="left:224.00px;top:78.73px;font-family:'Liberation Sans', sans-serif;font-size:13.5px;line-height:13.5px;font-weight:bold;font-style:normal;color:#000;transform:scaleX(1.0503);">4521.88</div>
<div class="t" style="left:278.78px;top:78.73px;font-family:'Liberation Sans', sans-serif;font-size:13.5px;line-height:13.5px;font-weight:bold;font-style:normal;color:#000;transform:scaleX(0.9695);">km</div>
<div class="t" style="left:321.11px;top:74.60px;font-family:'Liberation Sans', sans-serif;font-size:24px;line-height:24px;font-weight:bold;font-style:normal;color:#000;transform:scaleX(1.0596);">N</div>
<div class="t" style="left:19.69px;top:369.40px;font-family:'Liberation Sans', sans-serif;font-size:24px;line-height:24px;font-weight:normal;font-style:normal;color:#000;transform:scaleX(1.0743);">E</div>
<div class="t" style="left:97.45px;top:421.50px;font-family:'Liberation Serif', serif;font-size:10px;line-height:10px;font-weight:normal;font-style:normal;color:#000;transform:scaleX(1.3521);">1</div>
<div class="t" style="left:299.33px;top:334.50px;font-family:'Liberation Serif', serif;font-size:10px;line-height:10px;font-weight:normal;font-style:normal;color:#000;transform:scaleX(1.4930);">1</div>
<div class="t" style="left:563.62px;top:333.35px;font-family:'Liberation Sans', sans-serif;font-size:9px;line-height:9px;font-weight:bold;font-style:normal;color:#000;transform:scaleX(1.2644);">2</div>
<div class="t" style="left:37.76px;top:640.42px;font-family:'Liberation Serif', serif;font-size:14.8px;line-height:14.8px;font-weight:normal;font-style:normal;color:#000;transform:scaleX(1.0521);">Disappear</div>
<div class="t" style="left:37.76px;top:654.62px;font-family:'Liberation Serif', serif;font-size:14.8px;line-height:14.8px;font-weight:normal;font-style:normal;color:#000;transform:scaleX(1.0509);">Reappear</div>
<div class="t" style="left:19.01px;top:674.30px;font-family:'Liberation Serif', serif;font-size:10px;line-height:10px;font-weight:normal;font-style:normal;color:#000;transform:scaleX(0.9652);">Occult 4.2025.11.7</div>
<div class="t" style="left:305.30px;top:673.98px;font-family:'Liberation Serif', serif;font-size:12.8px;line-height:12.8px;font-weight:normal;font-style:italic;color:#000;transform:scaleX(0.9412);">2.000 km</div>
<div class="t" style="left:579.74px;top:664.19px;font-family:'Liberation Serif', serif;font-size:11.7px;line-height:11.7px;font-weight:normal;font-style:normal;color:#000;transform:scaleX(0.9639);">1 km Grid</div>
<div class="t" style="left:536.00px;top:674.59px;font-family:'Liberation Serif', serif;font-size:11.7px;line-height:11.7px;font-weight:normal;font-style:normal;color:#000;transform:scaleX(1.0068);">Plot width: 13 km</div>
<div class="t" style="left:668.39px;top:59.78px;font-family:'Liberation Sans', sans-serif;font-size:11.55px;line-height:11.55px;font-weight:normal;font-style:normal;color:#000;transform:scaleX(0.9022);-webkit-text-stroke:0.15px #000;">Find best fit</div>
<div class="t" style="left:721.06px;top:74.51px;font-family:'Liberation Sans', sans-serif;font-size:11.87px;line-height:11.87px;font-weight:normal;font-style:normal;color:#000;transform:scaleX(0.9017);-webkit-text-stroke:0.15px #000;">Center X</div>
<div class="t" style="left:721.07px;top:96.51px;font-family:'Liberation Sans', sans-serif;font-size:11.87px;line-height:11.87px;font-weight:normal;font-style:normal;color:#000;transform:scaleX(0.8887);-webkit-text-stroke:0.15px #000;">Center Y</div>
<div class="t" style="left:770.86px;top:71.71px;font-family:'Liberation Sans', sans-serif;font-size:12.81px;line-height:12.81px;font-weight:normal;font-style:normal;color:#000;transform:scaleX(0.8425);-webkit-text-stroke:0.15px #000;">0.00</div>
<div class="t" style="left:770.86px;top:93.71px;font-family:'Liberation Sans', sans-serif;font-size:12.81px;line-height:12.81px;font-weight:normal;font-style:normal;color:#000;transform:scaleX(0.8425);-webkit-text-stroke:0.15px #000;">0.00</div>
<div class="t" style="left:857.78px;top:73.78px;font-family:'Liberation Sans', sans-serif;font-size:11.55px;line-height:11.55px;font-weight:normal;font-style:normal;color:#000;transform:scaleX(0.8347);-webkit-text-stroke:0.15px #000;">---</div>
<div class="t" style="left:857.78px;top:95.78px;font-family:'Liberation Sans', sans-serif;font-size:11.55px;line-height:11.55px;font-weight:normal;font-style:normal;color:#000;transform:scaleX(0.8347);-webkit-text-stroke:0.15px #000;">---</div>
<div class="t" style="left:899.13px;top:74.51px;font-family:'Liberation Sans', sans-serif;font-size:11.87px;line-height:11.87px;font-weight:normal;font-style:normal;color:#000;transform:scaleX(0.9113);-webkit-text-stroke:0.15px #000;">Mass X</div>
<div class="t" style="left:899.13px;top:96.51px;font-family:'Liberation Sans', sans-serif;font-size:11.87px;line-height:11.87px;font-weight:normal;font-style:normal;color:#000;transform:scaleX(0.9113);-webkit-text-stroke:0.15px #000;">Mass Y</div>
<div class="t" style="left:942.84px;top:71.71px;font-family:'Liberation Sans', sans-serif;font-size:12.81px;line-height:12.81px;font-weight:normal;font-style:normal;color:#000;transform:scaleX(0.8953);-webkit-text-stroke:0.15px #000;">0.0</div>
<div class="t" style="left:942.84px;top:93.71px;font-family:'Liberation Sans', sans-serif;font-size:12.81px;line-height:12.81px;font-weight:normal;font-style:normal;color:#000;transform:scaleX(0.8953);-webkit-text-stroke:0.15px #000;">0.0</div>
<div class="t" style="left:932.68px;top:112.46px;font-family:'Liberation Sans', sans-serif;font-size:8.4px;line-height:8.4px;font-weight:normal;font-style:normal;color:#a8a8a8;transform:scaleX(0.9006);-webkit-text-stroke:0.15px #a8a8a8;">Shape model</div>
<div class="t" style="left:692.65px;top:123.10px;font-family:'Liberation Sans', sans-serif;font-size:11.65px;line-height:11.65px;font-weight:normal;font-style:normal;color:#000;transform:scaleX(0.8912);-webkit-text-stroke:0.15px #000;">Major axis (km)</div>
<div class="t" style="left:692.45px;top:145.30px;font-family:'Liberation Sans', sans-serif;font-size:11.65px;line-height:11.65px;font-weight:normal;font-style:normal;color:#000;transform:scaleX(0.8938);-webkit-text-stroke:0.15px #000;">Minor axis (km)</div>
<div class="t" style="left:711.40px;top:166.40px;font-family:'Liberation Sans', sans-serif;font-size:11.65px;line-height:11.65px;font-weight:normal;font-style:normal;color:#000;transform:scaleX(0.9011);-webkit-text-stroke:0.15px #000;">Orientation</div>
<div class="t" style="left:770.86px;top:120.71px;font-family:'Liberation Sans', sans-serif;font-size:12.81px;line-height:12.81px;font-weight:normal;font-style:normal;color:#8c8c8c;transform:scaleX(0.8425);-webkit-text-stroke:0.15px #8c8c8c;">3.00</div>
<div class="t" style="left:770.86px;top:142.71px;font-family:'Liberation Sans', sans-serif;font-size:12.81px;line-height:12.81px;font-weight:normal;font-style:normal;color:#8c8c8c;transform:scaleX(0.8425);-webkit-text-stroke:0.15px #8c8c8c;">3.00</div>
<div class="t" style="left:770.84px;top:164.71px;font-family:'Liberation Sans', sans-serif;font-size:12.81px;line-height:12.81px;font-weight:normal;font-style:normal;color:#8c8c8c;transform:scaleX(0.8953);-webkit-text-stroke:0.15px #8c8c8c;">0.0</div>
<div class="t" style="left:857.61px;top:121.69px;font-family:'Liberation Sans', sans-serif;font-size:12.6px;line-height:12.6px;font-weight:normal;font-style:normal;color:#a8a8a8;transform:scaleX(0.8765);-webkit-text-stroke:0.15px #a8a8a8;">0.00</div>
<div class="t" style="left:857.61px;top:143.69px;font-family:'Liberation Sans', sans-serif;font-size:12.6px;line-height:12.6px;font-weight:normal;font-style:normal;color:#a8a8a8;transform:scaleX(0.8765);-webkit-text-stroke:0.15px #a8a8a8;">0.00</div>
<div class="t" style="left:857.58px;top:165.69px;font-family:'Liberation Sans', sans-serif;font-size:12.6px;line-height:12.6px;font-weight:normal;font-style:normal;color:#a8a8a8;transform:scaleX(0.9333);-webkit-text-stroke:0.15px #a8a8a8;">0.0</div>
<div class="t" style="left:914.60px;top:126.71px;font-family:'Liberation Sans', sans-serif;font-size:11.87px;line-height:11.87px;font-weight:normal;font-style:normal;color:#008000;transform:scaleX(0.8949);-webkit-text-stroke:0.15px #008000;">dia = 3.00 km</div>
<div class="t" style="left:895.84px;top:140.71px;font-family:'Liberation Sans', sans-serif;font-size:11.87px;line-height:11.87px;font-weight:normal;font-style:normal;color:#0000ff;transform:scaleX(0.9125);-webkit-text-stroke:0.15px #0000ff;">a/b: 1.00, dMag: 0.00</div>
<div class="t" style="left:899.65px;top:170.91px;font-family:'Liberation Sans', sans-serif;font-size:11.87px;line-height:11.87px;font-weight:normal;font-style:normal;color:#000;transform:scaleX(0.8914);-webkit-text-stroke:0.15px #000;">Motion: 12.30 km/s</div>
<div class="t" style="left:690.87px;top:193.71px;font-family:'Liberation Sans', sans-serif;font-size:11.87px;line-height:11.87px;font-weight:normal;font-style:normal;color:#000;transform:scaleX(0.8795);-webkit-text-stroke:0.15px #000;">Circular</div>
<div class="t" style="left:757.64px;top:187.20px;font-family:'Liberation Sans', sans-serif;font-size:11.65px;line-height:11.65px;font-weight:normal;font-style:normal;color:#000;transform:scaleX(0.8902);-webkit-text-stroke:0.15px #000;">Use assumed</div>
<div class="t" style="left:758.00px;top:200.20px;font-family:'Liberation Sans', sans-serif;font-size:11.65px;line-height:11.65px;font-weight:normal;font-style:normal;color:#000;transform:scaleX(0.8961);-webkit-text-stroke:0.15px #000;">dia (3.0 km)</div>
<div class="t" style="left:859.35px;top:193.51px;font-family:'Liberation Sans', sans-serif;font-size:11.87px;line-height:11.87px;font-weight:normal;font-style:normal;color:#000;transform:scaleX(0.9027);-webkit-text-stroke:0.15px #000;">Include Miss events</div>
<div class="t" style="left:678.97px;top:221.65px;font-family:'Liberation Sans', sans-serif;font-size:13.12px;line-height:13.12px;font-weight:bold;font-style:normal;color:#a8a8a8;transform:scaleX(0.8936);">Double stars - show</div>
<div class="t" style="left:822.20px;top:225.17px;font-family:'Liberation Sans', sans-serif;font-size:10.5px;line-height:10.5px;font-weight:normal;font-style:normal;color:#a8a8a8;transform:scaleX(0.9398);-webkit-text-stroke:0.15px #a8a8a8;">Both</div>
<div class="t" style="left:874.25px;top:225.17px;font-family:'Liberation Sans', sans-serif;font-size:10.5px;line-height:10.5px;font-weight:normal;font-style:normal;color:#a8a8a8;transform:scaleX(0.8835);-webkit-text-stroke:0.15px #a8a8a8;">Primary</div>
<div class="t" style="left:939.81px;top:225.17px;font-family:'Liberation Sans', sans-serif;font-size:10.5px;line-height:10.5px;font-weight:normal;font-style:normal;color:#a8a8a8;transform:scaleX(0.8684);-webkit-text-stroke:0.15px #a8a8a8;">Secondary</div>
<div class="t" style="left:671.29px;top:250.85px;font-family:'Liberation Sans', sans-serif;font-size:13.23px;line-height:13.23px;font-weight:bold;font-style:normal;color:#006400;transform:scaleX(0.9959);">Quality of the fit</div>
<div class="t" style="left:780.00px;top:248.70px;font-family:'Liberation Sans', sans-serif;font-size:11.65px;line-height:11.65px;font-weight:normal;font-style:normal;color:#000;transform:scaleX(0.8914);-webkit-text-stroke:0.15px #000;">Astrometry only. No reliable size</div>
<div class="t" style="left:696.64px;top:271.71px;font-family:'Liberation Sans', sans-serif;font-size:12.81px;line-height:12.81px;font-weight:bold;font-style:normal;color:#7a0022;transform:scaleX(0.9491);">Review flags</div>
<div class="t" style="left:801.07px;top:272.09px;font-family:'Liberation Sans', sans-serif;font-size:12.6px;line-height:12.6px;font-weight:normal;font-style:normal;color:#000;transform:scaleX(0.9650);-webkit-text-stroke:0.15px #000;">0 items are tagged for review</div>
<div class="t" style="left:669.93px;top:305.47px;font-family:'Liberation Sans', sans-serif;font-size:12.39px;line-height:12.39px;font-weight:bold;font-style:normal;color:#7a0022;transform:scaleX(0.9645);">P</div>
<div class="t" style="left:670.04px;top:318.67px;font-family:'Liberation Sans', sans-serif;font-size:12.39px;line-height:12.39px;font-weight:bold;font-style:normal;color:#7a0022;transform:scaleX(1.0156);">L</div>
<div class="t" style="left:669.30px;top:331.87px;font-family:'Liberation Sans', sans-serif;font-size:12.39px;line-height:12.39px;font-weight:bold;font-style:normal;color:#7a0022;transform:scaleX(0.9942);">O</div>
<div class="t" style="left:670.50px;top:345.07px;font-family:'Liberation Sans', sans-serif;font-size:12.39px;line-height:12.39px;font-weight:bold;font-style:normal;color:#7a0022;transform:scaleX(0.9524);">T</div>
<div class="t" style="left:690.15px;top:301.65px;font-family:'Liberation Sans', sans-serif;font-size:12.18px;line-height:12.18px;font-weight:bold;font-style:normal;color:#7a0022;transform:scaleX(1.0095);">Scale</div>
<div class="t" style="left:690.17px;top:328.25px;font-family:'Liberation Sans', sans-serif;font-size:12.18px;line-height:12.18px;font-weight:bold;font-style:normal;color:#7a0022;transform:scaleX(0.9515);">Size</div>
<div class="t" style="left:748.25px;top:328.75px;font-family:'Liberation Sans', sans-serif;font-size:12.18px;line-height:12.18px;font-weight:bold;font-style:normal;color:#7a0022;transform:scaleX(0.9314);">normal</div>
<div class="t" style="left:812.75px;top:328.75px;font-family:'Liberation Sans', sans-serif;font-size:12.18px;line-height:12.18px;font-weight:bold;font-style:normal;color:#7a0022;transform:scaleX(1.0483);">x 2</div>
<div class="t" style="left:856.45px;top:328.75px;font-family:'Liberation Sans', sans-serif;font-size:12.18px;line-height:12.18px;font-weight:bold;font-style:normal;color:#7a0022;transform:scaleX(1.0690);">x 5</div>
<div class="t" style="left:904.75px;top:329.25px;font-family:'Liberation Sans', sans-serif;font-size:12.18px;line-height:12.18px;font-weight:bold;font-style:normal;color:#800080;transform:scaleX(0.9412);">Form opacity</div>
<div class="t" style="left:691.15px;top:354.15px;font-family:'Liberation Sans', sans-serif;font-size:12.18px;line-height:12.18px;font-weight:bold;font-style:normal;color:#7a0022;transform:scaleX(0.9924);">Scroll range x1.25</div>
<div class="t" style="left:675.62px;top:383.20px;font-family:'Liberation Sans', sans-serif;font-size:11.65px;line-height:11.65px;font-weight:normal;font-style:normal;color:#000;transform:scaleX(0.9233);-webkit-text-stroke:0.15px #000;">RMS fit 0.8 ±0.0 km</div>
<div class="t" style="left:762.99px;top:405.74px;font-family:'Liberation Mono', monospace;font-size:13.5px;line-height:13.5px;font-weight:normal;font-style:normal;color:#000;transform:scaleX(1.2000);">1</div>
<div class="t" style="left:804.93px;top:405.74px;font-family:'Liberation Mono', monospace;font-size:13.5px;line-height:13.5px;font-weight:normal;font-style:normal;color:#000;transform:scaleX(1.0132);">Katsumasa Hosoi, near M</div>
<div class="t" style="left:763.14px;top:417.74px;font-family:'Liberation Mono', monospace;font-size:13.5px;line-height:13.5px;font-weight:normal;font-style:normal;color:#000;transform:scaleX(1.0176);">2(P) Predicted</div>
</div></body></html>
